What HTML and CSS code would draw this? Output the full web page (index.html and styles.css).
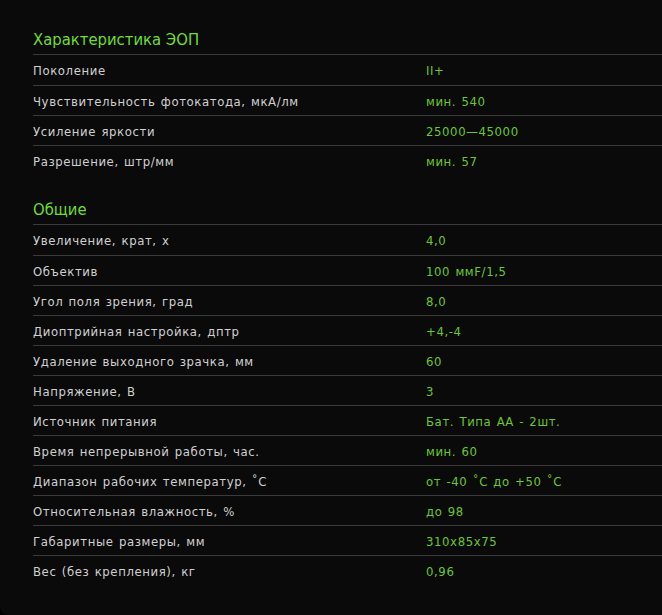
FILE: index.html
```html
<!DOCTYPE html>
<html lang="ru">
<head>
<meta charset="utf-8">
<link rel="stylesheet" href="styles.css">
</head>
<body>
<div class="panel">
  <section class="group">
    <h2 class="group-title">Характеристика ЭОП</h2>
    <div class="row"><span class="label">Поколение</span><span class="value">II+</span></div>
    <div class="row"><span class="label">Чувствительность фотокатода, мкА/лм</span><span class="value">мин. 540</span></div>
    <div class="row"><span class="label">Усиление яркости</span><span class="value">25000—45000</span></div>
    <div class="row"><span class="label">Разрешение, штр/мм</span><span class="value">мин. 57</span></div>
  </section>
  <section class="group">
    <h2 class="group-title">Общие</h2>
    <div class="row"><span class="label">Увеличение, крат, x</span><span class="value">4,0</span></div>
    <div class="row"><span class="label">Объектив</span><span class="value">100 ммF/1,5</span></div>
    <div class="row"><span class="label">Угол поля зрения, град</span><span class="value">8,0</span></div>
    <div class="row"><span class="label">Диоптрийная настройка, дптр</span><span class="value">+4,-4</span></div>
    <div class="row"><span class="label">Удаление выходного зрачка, мм</span><span class="value">60</span></div>
    <div class="row"><span class="label">Напряжение, В</span><span class="value">3</span></div>
    <div class="row"><span class="label">Источник питания</span><span class="value">Бат. Типа АА - 2шт.</span></div>
    <div class="row"><span class="label">Время непрерывной работы, час.</span><span class="value">мин. 60</span></div>
    <div class="row"><span class="label">Диапазон рабочих температур, ˚С</span><span class="value">от -40 ˚С до +50 ˚С</span></div>
    <div class="row"><span class="label">Относительная влажность, %</span><span class="value">до 98</span></div>
    <div class="row"><span class="label">Габаритные размеры, мм</span><span class="value">310x85x75</span></div>
    <div class="row"><span class="label">Вес (без крепления), кг</span><span class="value">0,96</span></div>
  </section>
</div>
</body>
</html>
```
FILE: styles.css
```css
html, body {
  margin: 0;
  padding: 0;
  background: #000;
}
body {
  width: 662px;
  height: 615px;
  overflow: hidden;
  font-family: "DejaVu Sans Condensed", "DejaVu Sans", sans-serif;
}
.panel {
  box-sizing: border-box;
  width: 680px;
  height: 615px;
  background: #0a0a0a;
  border-bottom-left-radius: 8px;
  padding: 26px 0 0 33px;
}
.group + .group {
  margin-top: 21px;
}
.group-title {
  margin: 0;
  box-sizing: border-box;
  height: 29px;
  line-height: 28px;
  font-size: 16.5px;
  font-weight: normal;
  color: #6fdc35;
  border-bottom: 1px solid #3a3a3a;
}
.row {
  display: grid;
  grid-template-columns: 393px 1fr;
  height: 30px;
  line-height: 31px;
  font-size: 13px;
  letter-spacing: 0.6px;
  word-spacing: 1px;
  box-sizing: border-box;
}
.row + .row {
  border-top: 1px solid #3a3a3a;
}
.label {
  color: #d0d0d0;
}
.value {
  color: #6cc72f;
}
```
